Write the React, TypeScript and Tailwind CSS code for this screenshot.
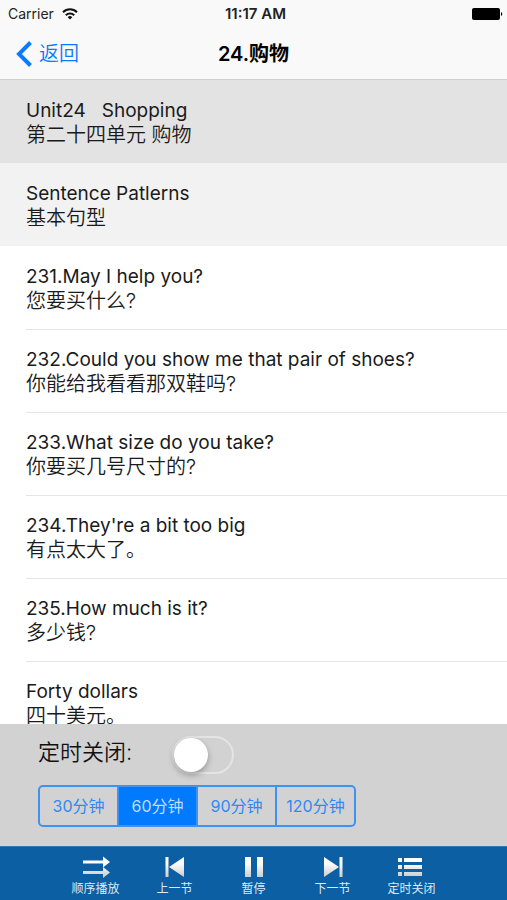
import { useState } from 'react';
import type { ReactNode } from 'react';

type Sentence = { en: string; zh: string; row: string; line: string };

const sentences: Sentence[] = [
  { en: 'Unit24   Shopping', zh: '第二十四单元 购物', row: 'bg-[#e3e3e3]', line: 'border-transparent' },
  { en: 'Sentence Patlerns', zh: '基本句型', row: 'bg-[#f2f2f2]', line: 'border-transparent' },
  { en: '231.May I help you?', zh: '您要买什么?', row: 'bg-white', line: 'border-transparent' },
  { en: '232.Could you show me that pair of shoes?', zh: '你能给我看看那双鞋吗?', row: 'bg-white', line: 'border-[#e6e6e6]' },
  { en: '233.What size do you take?', zh: '你要买几号尺寸的?', row: 'bg-white', line: 'border-[#e6e6e6]' },
  { en: "234.They're a bit too big", zh: '有点太大了。', row: 'bg-white', line: 'border-[#e6e6e6]' },
  { en: '235.How much is it?', zh: '多少钱?', row: 'bg-white', line: 'border-[#e6e6e6]' },
  { en: 'Forty dollars', zh: '四十美元。', row: 'bg-white', line: 'border-[#e6e6e6]' },
];

const durations = [30, 60, 90, 120];

function StatusBar() {
  return (
    <div className="grid h-7 grid-cols-3 items-center pr-1 pl-2 text-[#222]">
      <div className="flex items-center gap-2">
        <span className="text-sm">Carrier</span>
        <svg width="16" height="12" viewBox="0 0 16 12" fill="none" stroke="#111" strokeWidth="2" aria-hidden="true">
          <path d="M1 4.2a10 10 0 0 1 14 0" />
          <path d="M3.8 7.2a6 6 0 0 1 8.4 0" />
          <path d="M8 11.6 5.7 9.2a3.3 3.3 0 0 1 4.6 0z" fill="#111" stroke="none" />
        </svg>
      </div>
      <span className="text-center text-[15px] font-semibold whitespace-nowrap">11:17 AM</span>
      <svg className="justify-self-end" width="31" height="12" viewBox="0 0 31 12" aria-hidden="true">
        <rect width="28" height="12" rx="2" />
        <path d="M29 4a2.2 2.2 0 0 1 0 4z" />
      </svg>
    </div>
  );
}

function NavBar() {
  return (
    <div className="grid h-[51px] grid-cols-3 items-center px-4">
      <button type="button" className="flex items-center gap-[7px] justify-self-start text-xl font-[350] text-[#0a7aff]">
        <svg width="16" height="26" viewBox="0 0 16 26" fill="none" stroke="currentColor" strokeWidth="4" aria-hidden="true">
          <path d="M14.5 1.5 3 13l11.5 11.5" />
        </svg>
        返回
      </button>
      <h1 className="text-center text-xl font-semibold whitespace-nowrap text-black">24.购物</h1>
    </div>
  );
}

function SentenceRow({ en, zh, row, line }: Sentence) {
  return (
    <li className={`h-[83px] pl-[26px] ${row}`}>
      <div className={`flex h-full flex-col justify-center border-t pt-px text-[#1a1a1a] ${line}`}>
        <p lang="en" className="text-[19px] leading-6 whitespace-pre">{en}</p>
        <p className="text-xl leading-6 font-[350]">{zh}</p>
      </div>
    </li>
  );
}

function TimerPanel() {
  const [enabled, setEnabled] = useState(false);
  const [minutes, setMinutes] = useState(60);
  return (
    <section className="shrink-0 bg-[#d2d2d2] px-[38px] pt-3 pb-[19px]">
      <div className="flex items-start gap-10">
        <label htmlFor="timer" className="text-[22px] leading-8 font-[350] text-[#111]">定时关闭:</label>
        <input
          id="timer"
          type="checkbox"
          role="switch"
          checked={enabled}
          onChange={(e) => setEnabled(e.target.checked)}
          className="flex h-[38px] w-[62px] appearance-none items-center rounded-full border-2 border-[#e4e4e4] before:size-[34px] before:rounded-full before:bg-white before:shadow-[0_3px_6px_rgba(0,0,0,0.3)] checked:justify-end checked:bg-[#4cd964]"
        />
      </div>
      <fieldset className="mt-[11px] flex h-[42px] w-[318px] max-w-full divide-x-2 divide-[#3f92f0] overflow-hidden rounded-[5px] border-2 border-[#3f92f0]">
        {durations.map((d) => (
          <label
            key={d}
            className="flex flex-1 cursor-pointer items-center justify-center text-base whitespace-nowrap text-[#2d8af5] has-checked:bg-[#007aff] has-checked:text-[#c4dcf5]"
          >
            <input
              type="radio"
              name="minutes"
              className="sr-only"
              checked={minutes === d}
              onChange={() => setMinutes(d)}
            />
            {d}分钟
          </label>
        ))}
      </fieldset>
    </section>
  );
}

function Glyph({ children }: { children: ReactNode }) {
  return (
    <svg width="28" height="22" viewBox="0 0 28 22" fill="url(#silver)" aria-hidden="true">
      {children}
    </svg>
  );
}

function ToolButton({ label, children }: { label: string; children: ReactNode }) {
  return (
    <button type="button" className="flex w-[79px] flex-col items-center gap-[3px] text-xs leading-4 text-[#dceaf6]">
      <Glyph>{children}</Glyph>
      {label}
    </button>
  );
}

function Toolbar() {
  return (
    <nav className="flex h-[54px] shrink-0 items-start justify-center border-t border-[#3878aa] bg-[#0c5fa3] pt-[9px]">
      <svg width="0" height="0" className="absolute" aria-hidden="true">
        <linearGradient id="silver" gradientUnits="userSpaceOnUse" x1="0" y1="0" x2="0" y2="22">
          <stop offset="0.3" stopColor="#fff" />
          <stop offset="1" stopColor="#c9c9c9" />
        </linearGradient>
      </svg>
      <ToolButton label="顺序播放">
        <path d="M1 4.500H21V0.500L28 6l-7 5.500V7.500H1z" />
        <path d="M1 15H21V11l7 5.500-7 5.500V18H1z" />
      </ToolButton>
      <ToolButton label="上一节">
        <path d="M4.500 1h3v20h-3zM8 11 23 1v20z" />
      </ToolButton>
      <ToolButton label="暂停">
        <path d="M5 1h6v20H5zM17 1h6v20h-6z" />
      </ToolButton>
      <ToolButton label="下一节">
        <path d="M20.500 1h3v20h-3zM20 11 5 1v20z" />
      </ToolButton>
      <ToolButton label="定时关闭">
        <path d="M0 2h4v4H0zM0 9h4v4H0zM0 16h4v4H0zM6 2h18v4H6zM6 9h18v4H6zM6 16h18v4H6z" />
      </ToolButton>
    </nav>
  );
}

export default function App() {
  return (
    <div lang="zh-CN" className="flex h-screen flex-col bg-white font-['Inter','Noto_Sans_CJK_SC',sans-serif]">
      <header className="shrink-0 border-b border-[#d0d0d0] bg-[#f9f9f9]">
        <StatusBar />
        <NavBar />
      </header>
      <main className="min-h-0 flex-1 overflow-hidden">
        <ul>
          {sentences.map((s) => (
            <SentenceRow key={s.en} {...s} />
          ))}
        </ul>
      </main>
      <TimerPanel />
      <Toolbar />
    </div>
  );
}
